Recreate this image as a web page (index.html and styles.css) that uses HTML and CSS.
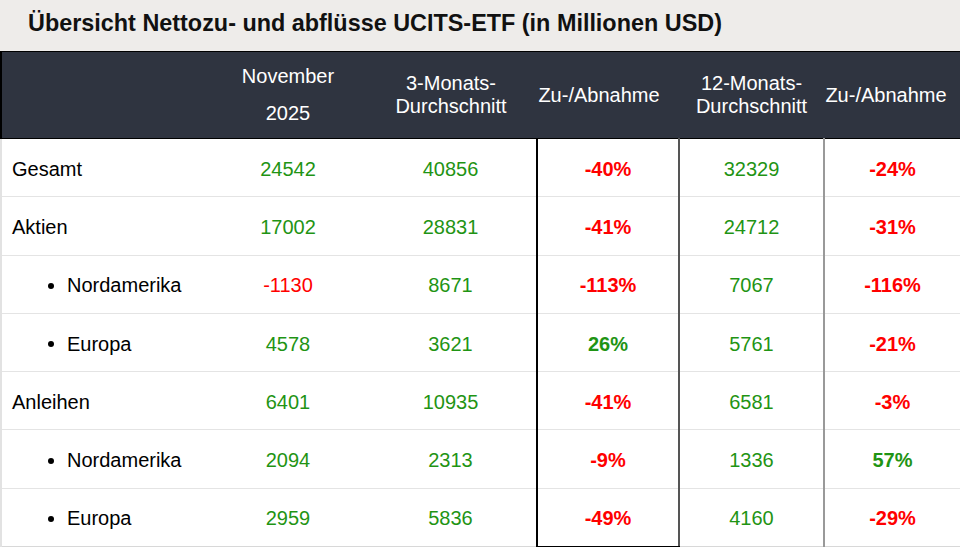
FILE: index.html
```html
<!DOCTYPE html>
<html lang="de">
<head>
<meta charset="utf-8">
<title>Übersicht Nettozu- und abflüsse UCITS-ETF</title>
<link rel="stylesheet" href="styles.css">
</head>
<body>
<div class="page">
  <h1 class="title">Übersicht Nettozu- und abflüsse UCITS-ETF (in Millionen USD)</h1>
  <table class="flows">
    <colgroup>
      <col class="c-label">
      <col class="c-nov">
      <col class="c-3m">
      <col class="c-za1">
      <col class="c-12m">
      <col class="c-za2">
    </colgroup>
    <thead>
      <tr>
        <th class="h-label"></th>
        <th class="h-nov"><span class="nov-line">November</span><span class="nov-line">2025</span></th>
        <th>3-Monats-<br>Durchschnitt</th>
        <th class="h-za1">Zu-/Abnahme</th>
        <th>12-Monats-<br>Durchschnitt</th>
        <th class="h-za2">Zu-/Abnahme</th>
      </tr>
    </thead>
    <tbody>
      <tr>
        <td class="label">Gesamt</td>
        <td class="pos">24542</td><td class="pos">40856</td>
        <td class="za1 neg b">-40%</td><td class="m12 pos">32329</td><td class="za2 neg b">-24%</td>
      </tr>
      <tr>
        <td class="label">Aktien</td>
        <td class="pos">17002</td><td class="pos">28831</td>
        <td class="za1 neg b">-41%</td><td class="m12 pos">24712</td><td class="za2 neg b">-31%</td>
      </tr>
      <tr>
        <td class="label sub"><span class="dot"></span>Nordamerika</td>
        <td class="neg">-1130</td><td class="pos">8671</td>
        <td class="za1 neg b">-113%</td><td class="m12 pos">7067</td><td class="za2 neg b">-116%</td>
      </tr>
      <tr>
        <td class="label sub"><span class="dot"></span>Europa</td>
        <td class="pos">4578</td><td class="pos">3621</td>
        <td class="za1 pos b">26%</td><td class="m12 pos">5761</td><td class="za2 neg b">-21%</td>
      </tr>
      <tr>
        <td class="label">Anleihen</td>
        <td class="pos">6401</td><td class="pos">10935</td>
        <td class="za1 neg b">-41%</td><td class="m12 pos">6581</td><td class="za2 neg b">-3%</td>
      </tr>
      <tr>
        <td class="label sub"><span class="dot"></span>Nordamerika</td>
        <td class="pos">2094</td><td class="pos">2313</td>
        <td class="za1 neg b">-9%</td><td class="m12 pos">1336</td><td class="za2 pos b">57%</td>
      </tr>
      <tr class="last">
        <td class="label sub"><span class="dot"></span>Europa</td>
        <td class="pos">2959</td><td class="pos">5836</td>
        <td class="za1 neg b">-49%</td><td class="m12 pos">4160</td><td class="za2 neg b">-29%</td>
      </tr>
    </tbody>
  </table>
</div>
</body>
</html>
```

FILE: styles.css
```css
* { box-sizing: border-box; }
html, body { margin: 0; padding: 0; background: #ffffff; }
body {
  font-family: "Liberation Sans", Arial, Helvetica, sans-serif;
  color: #000;
  width: 960px;
  height: 547px;
  overflow: hidden;
}
.page { width: 960px; }
.title {
  margin: 0;
  height: 51px;
  background: #eeecea;
  font-size: 23.4px;
  font-weight: bold;
  color: #111;
  padding: 10px 0 0 28px;
}
.flows {
  width: 960px;
  border-collapse: collapse;
  table-layout: fixed;
  font-size: 20px;
}
.c-label { width: 210px; }
.c-nov { width: 154px; }
.c-3m { width: 172px; }
.c-za1 { width: 142px; }
.c-12m { width: 145px; }
.c-za2 { width: 137px; }

thead th {
  background: #2f3440;
  color: #fff;
  font-weight: normal;
  height: 87px;
  padding: 0;
  text-align: center;
  vertical-align: middle;
  line-height: 23px;
  border-top: 1px solid #000;
  border-bottom: 1px solid #000;
}
thead th.h-label { border-left: 2px solid #000; }
thead th.h-za2 { border-right: 2px solid #d8d8d8; padding-right: 12px; }
thead th.h-za1 { padding-right: 18px; }
.nov-line { display: block; line-height: 37px; }

tbody td {
  height: 58.3px;
  padding: 3px 0 0;
  text-align: center;
  vertical-align: middle;
  border-bottom: 1px solid #e4e4e4;
}
tbody tr.last td { border-bottom: 1px solid #d8d8d8; }
tbody td.label {
  text-align: left;
  padding-left: 10px;
  border-left: 2px solid #e2e2e2;
}
tbody td.label.sub { padding-left: 46px; }
.dot {
  display: inline-block;
  width: 6px;
  height: 6px;
  border-radius: 50%;
  background: #000;
  vertical-align: middle;
  margin: -2px 13px 0 0;
}
td.za1 {
  border-left: 2px solid #000;
  border-right: 2px solid #555;
}
tbody tr.last td.za1 { border-bottom: 2px solid #000; }
td.za2 { border-left: 2px solid #999; }
td.za2 { border-right: 2px solid #e2e2e2; }
.pos { color: #1f9414; }
.neg { color: #ff0000; }
.b { font-weight: bold; }
```
